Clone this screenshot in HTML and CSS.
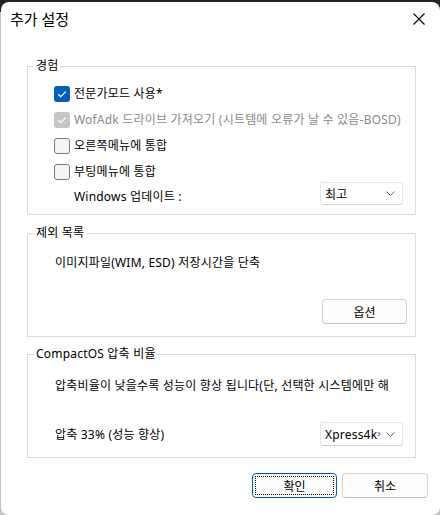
FILE: index.html
```html
<!DOCTYPE html>
<html lang="ko">
<head>
<meta charset="utf-8">
<title>추가 설정</title>
<link rel="stylesheet" href="styles.css">
</head>
<body>
<div class="window">
  <div class="titlebar">
    <span class="title">추가 설정</span>
    <svg class="close" width="12" height="12" viewBox="0 0 12 12"><path d="M0.5 0.5 L11.5 11.5 M11.5 0.5 L0.5 11.5" stroke="#000" stroke-width="1.1" fill="none"/></svg>
  </div>
  <div class="content">
    <fieldset class="group g1">
      <legend>경험</legend>
      <div class="inner">
        <div class="rows">
          <label class="check"><span class="box checked"><svg width="16" height="16" viewBox="0 0 16 16"><path d="M4.3 8.3 L6.8 10.7 L11.7 5.6" stroke="#fff" stroke-width="1.2" fill="none"/></svg></span><span>전문가모드 사용*</span></label>
          <label class="check disabled"><span class="box checked dim"><svg width="16" height="16" viewBox="0 0 16 16"><path d="M4.3 8.3 L6.8 10.7 L11.7 5.6" stroke="#fff" stroke-width="1.2" fill="none"/></svg></span><span>WofAdk 드라이브 가져오기 (시트템에 오류가 날 수 있음-BOSD)</span></label>
          <label class="check"><span class="box"></span><span>오른쪽메뉴에 통합</span></label>
          <label class="check"><span class="box"></span><span>부팅메뉴에 통합</span></label>
        </div>
        <div class="update">
          <span class="update-label">Windows 업데이트 :</span>
          <div class="select"><span class="sel-text">최고</span><svg width="9" height="5" viewBox="0 0 9 5"><path d="M0.5 0.5 L4.5 4.5 L8.5 0.5" stroke="#666" stroke-width="1" fill="none"/></svg></div>
        </div>
      </div>
    </fieldset>
    <fieldset class="group g2">
      <legend>제외 목록</legend>
      <div class="inner">
        <div class="line">이미지파일(WIM, ESD) 저장시간을 단축</div>
        <div class="btnrow"><button class="btn">옵션</button></div>
      </div>
    </fieldset>
    <fieldset class="group g3">
      <legend>CompactOS 압축 비율</legend>
      <div class="inner">
        <div class="line">압축비율이 낮을수록 성능이 향상 됩니다(단, 선택한 시스템에만 해</div>
        <div class="ratio">
          <span>압축 33% (성능 향상)</span>
          <div class="select sel2"><span class="sel-text">Xpress4k<span class="sup">³</span></span><svg width="9" height="5" viewBox="0 0 9 5"><path d="M0.5 0.5 L4.5 4.5 L8.5 0.5" stroke="#666" stroke-width="1" fill="none"/></svg></div>
        </div>
      </div>
    </fieldset>
  </div>
  <div class="actions">
    <button class="btn default">확인</button>
    <button class="btn cancel">취소</button>
  </div>
</div>
</body>
</html>
```
FILE: styles.css
```css
html, body {
  margin: 0;
  padding: 0;
}
body {
  width: 440px;
  height: 515px;
  overflow: hidden;
  background: linear-gradient(#222 0, #222 12px, #c4c4c4 12px);
  font-family: "Noto Sans", "Noto Sans CJK KR", sans-serif;
  font-size: 12px;
  letter-spacing: 0.2px;
  color: #000;
}
.window {
  margin: 2px 0 0 1px;
  width: 439px;
  height: 513px;
  background: #fff;
  border-radius: 8px;
  box-sizing: border-box;
  display: flex;
  flex-direction: column;
}
.titlebar {
  height: 56px;
  box-sizing: border-box;
  padding: 0 15px 0 9px;
  display: flex;
  justify-content: space-between;
  align-items: flex-start;
}
.title {
  font-size: 15px;
  line-height: 20px;
  margin-top: 7px;
  letter-spacing: 0;
}
.close {
  margin-top: 11px;
}
.content {
  padding: 0 24px 0 26px;
  display: flex;
  flex-direction: column;
}
.group {
  margin: 0;
  padding: 0;
  border: 1px solid #dcdcdc;
  min-width: 0;
}
.group legend {
  margin-left: 6px;
  padding: 0 2px;
  font-size: 12px;
  line-height: 16px;
}
.g1 .inner {
  padding: 12px 12px 9px 26px;
}
.rows {
  display: flex;
  flex-direction: column;
  gap: 10px;
}
.check {
  display: flex;
  align-items: center;
  gap: 4px;
  height: 16px;
  line-height: 16px;
  white-space: nowrap;
}
.box {
  width: 16px;
  height: 16px;
  flex: none;
  box-sizing: border-box;
  border-radius: 3px;
  border: 1px solid #7a7a7a;
  background: #f5f5f5;
}
.box svg {
  display: block;
}
.box.checked {
  border: none;
  background: #005fb8;
}
.box.checked.dim {
  background: #c6c6c6;
}
.disabled {
  color: #8a8a8a;
}
.update {
  margin-top: 2px;
  display: flex;
  align-items: center;
  padding-left: 20px;
}
.update-label {
  margin-top: 4px;
}
.select {
  margin-left: auto;
  width: 83px;
  height: 23px;
  box-sizing: border-box;
  border: 1px solid #e6e6e6;
  border-bottom-color: #d2d2d2;
  border-radius: 3px;
  background: #fff;
  display: flex;
  align-items: center;
  justify-content: space-between;
  padding: 0 7px 0 4px;
}
.sel-text {
  white-space: nowrap;
  overflow: hidden;
}
.sup {
  font-size: 9px;
  color: #444;
}
.g2 {
  margin-top: 10px;
}
.g2 .inner {
  padding: 14px 8px 12px 27px;
}
.line {
  line-height: 16px;
  white-space: nowrap;
  overflow: hidden;
}
.btnrow {
  margin-top: 28px;
  display: flex;
  justify-content: flex-end;
}
.btn {
  width: 85px;
  height: 25px;
  box-sizing: border-box;
  border: 1px solid #d3d3d3;
  border-bottom-color: #c0c0c0;
  border-radius: 4px;
  background: #fdfdfd;
  font-family: "Noto Sans", "Noto Sans CJK KR", sans-serif;
  font-size: 12px;
  color: #000;
  padding: 0;
}
.g3 {
  margin-top: 9px;
}
.g3 .inner {
  padding: 16px 12px 11px 27px;
}
.ratio {
  margin-top: 28px;
  display: flex;
  align-items: center;
}
.sel2 {
  height: 24px;
}
.actions {
  margin-top: 15px;
  padding-right: 12px;
  display: flex;
  justify-content: flex-end;
  gap: 5px;
}
.btn.cancel {
  width: 86px;
}
.btn.default {
  border: 1px solid #005fb8;
  outline: 1px dotted #000;
  outline-offset: -4px;
}
```
